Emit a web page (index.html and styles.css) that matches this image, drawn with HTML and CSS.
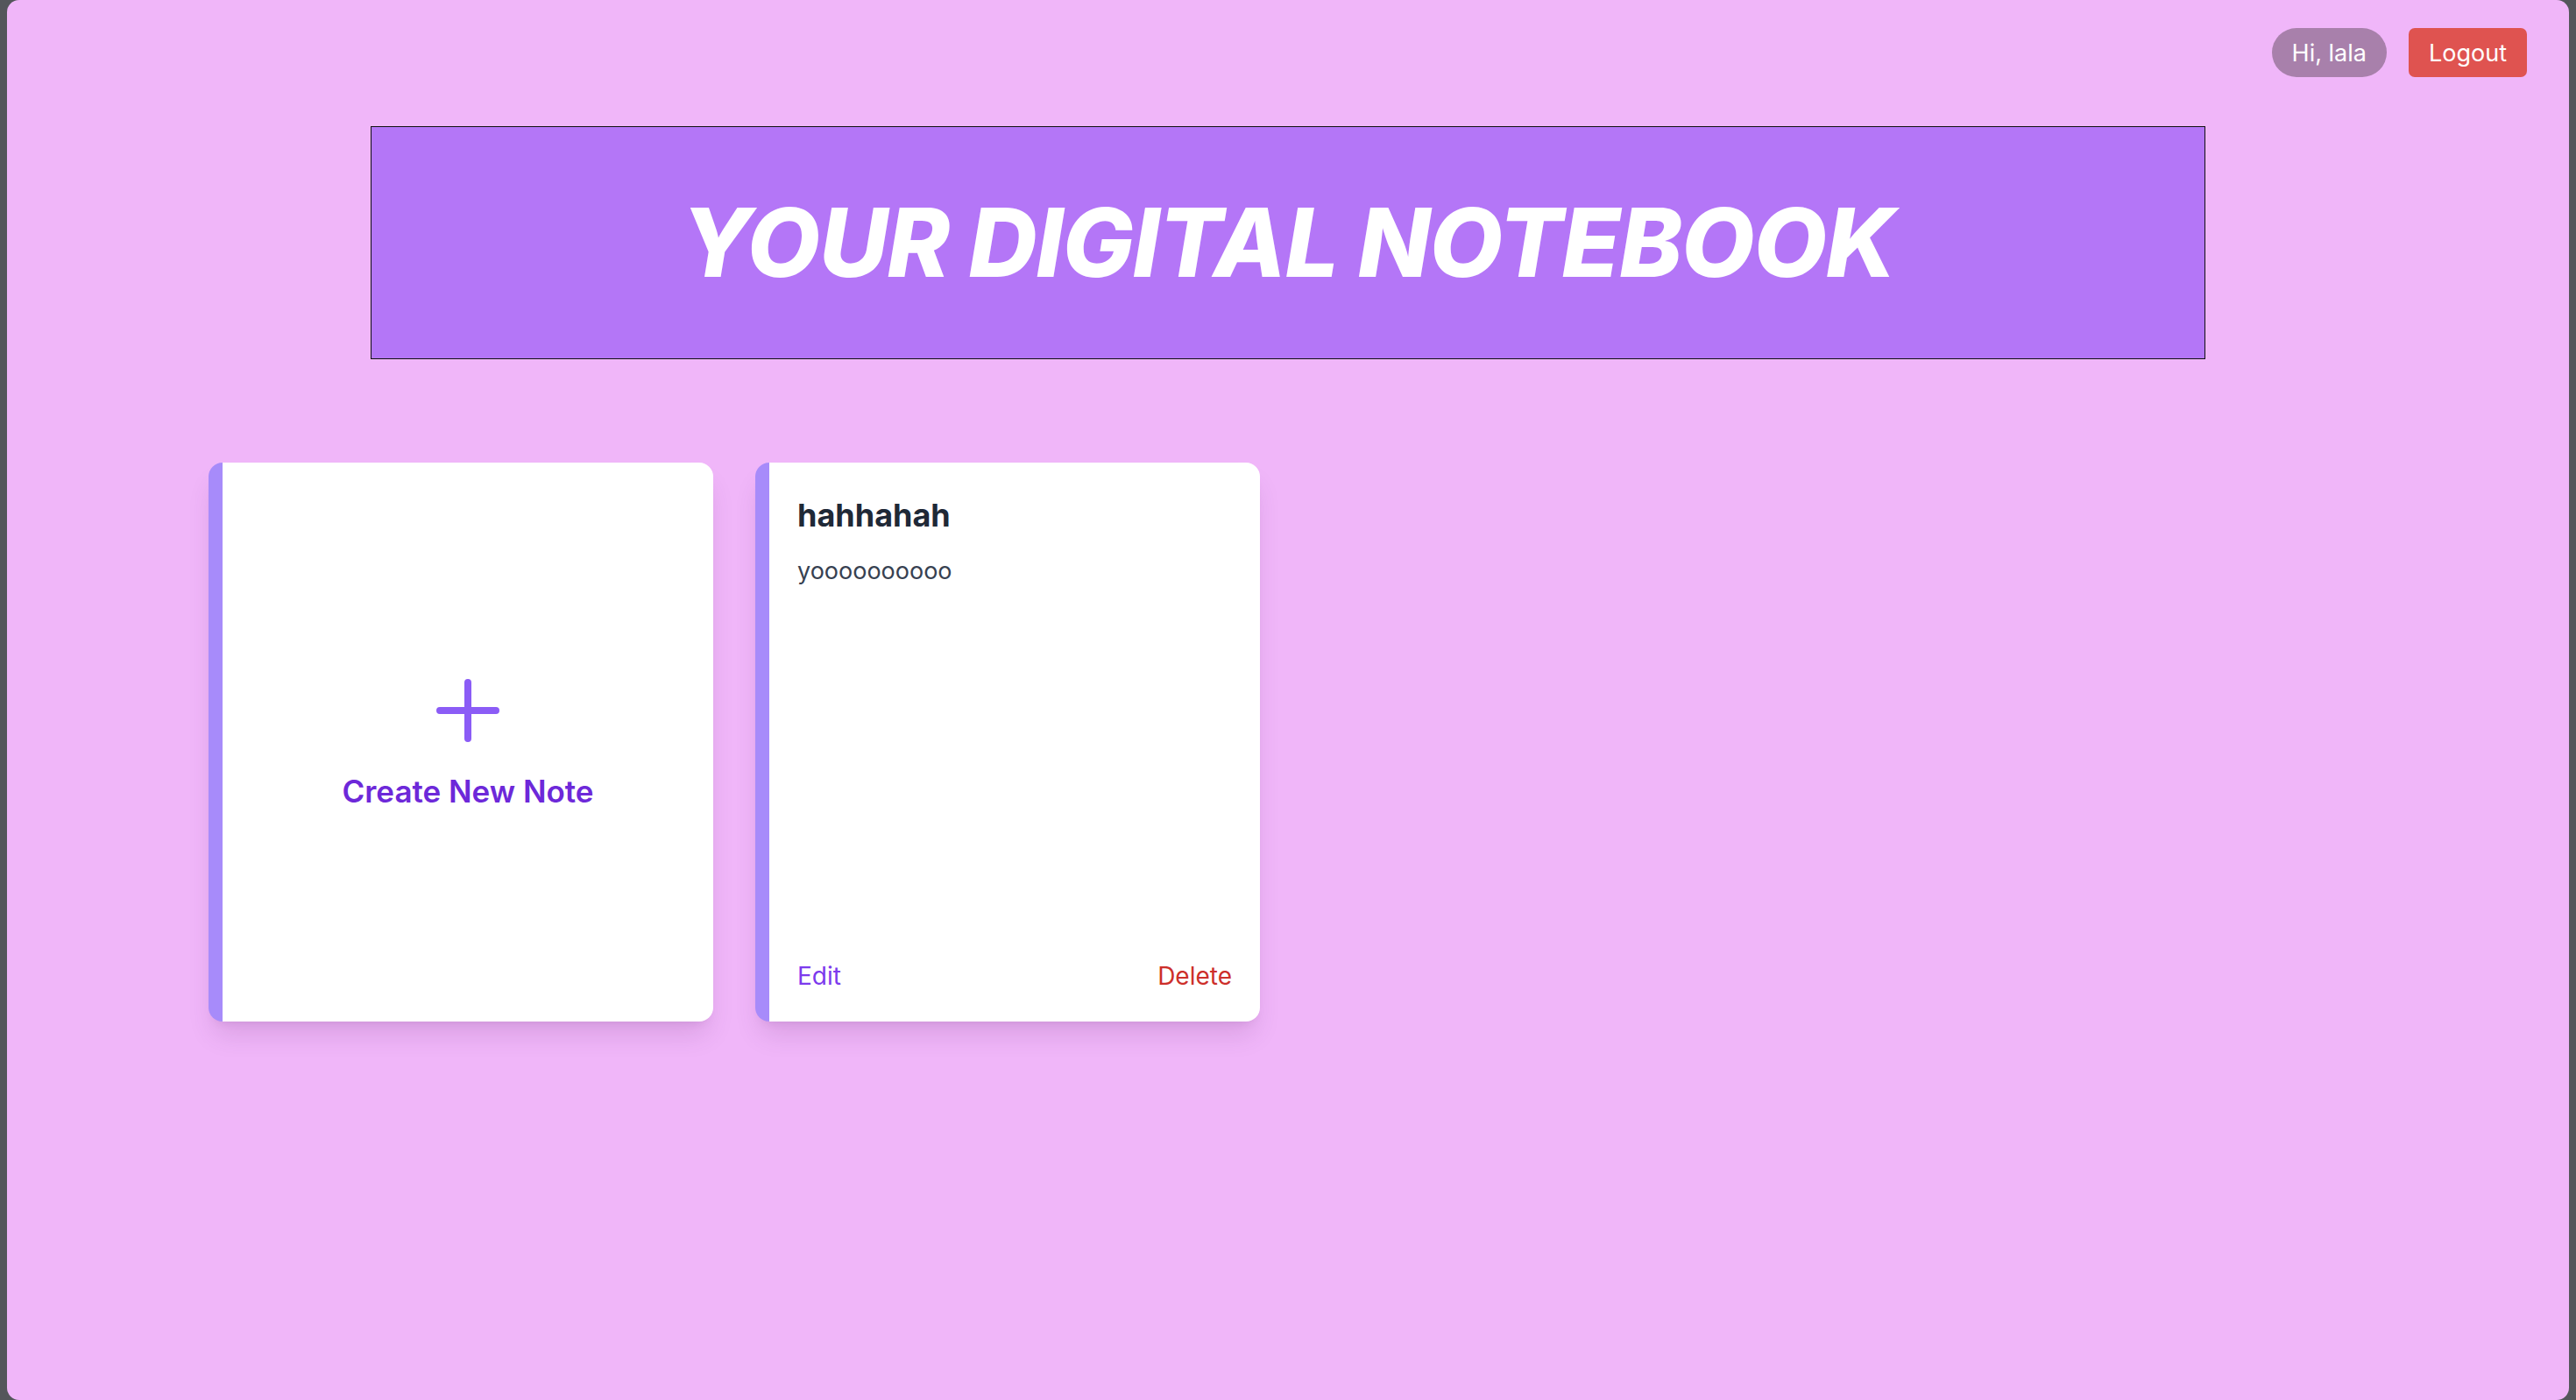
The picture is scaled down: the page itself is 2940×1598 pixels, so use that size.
FILE: index.html
```html
<!DOCTYPE html>
<html lang="en">
<head>
<meta charset="utf-8">
<title>Your Digital Notebook</title>
<link rel="stylesheet" href="styles.css">
</head>
<body>
<div class="window">
  <div class="topbar">
    <span class="greeting">Hi, lala</span>
    <button class="logout">Logout</button>
  </div>
  <header class="hero">
    <h1 class="hero-title">YOUR DIGITAL NOTEBOOK</h1>
  </header>
  <main class="notes">
    <div class="card card-create">
      <svg class="plus" viewBox="0 0 24 24" fill="none" stroke="currentColor" stroke-width="2" stroke-linecap="round" stroke-linejoin="round"><path d="M12 4v16m8-8H4"/></svg>
      <span class="create-label">Create New Note</span>
    </div>
    <div class="card card-note">
      <h2 class="note-title">hahhahah</h2>
      <p class="note-body">yoooooooooo</p>
      <div class="note-actions">
        <span class="edit">Edit</span>
        <span class="delete">Delete</span>
      </div>
    </div>
  </main>
</div>
</body>
</html>
```
FILE: styles.css
```css
html, body {
  margin: 0;
  padding: 0;
  background: #54565b;
}
body {
  font-family: Inter, "Noto Sans", "Liberation Sans", sans-serif;
}
.window {
  margin: 0 8px;
  height: 1598px;
  background: #f0b6f9;
  border-radius: 14px;
  overflow: hidden;
  box-sizing: border-box;
}
.topbar {
  display: flex;
  justify-content: flex-end;
  align-items: center;
  gap: 25px;
  padding: 32px 48px 0;
}
.greeting,
.logout {
  display: inline-flex;
  align-items: center;
  height: 56px;
  padding: 0 23px;
  font-size: 27px;
  color: #ffffff;
  font-family: inherit;
  box-sizing: border-box;
}
.greeting {
  background: #a880ab;
  border-radius: 9999px;
}
.logout {
  background: #df5350;
  border: none;
  border-radius: 7px;
}
.hero {
  width: 2094px;
  height: 266px;
  margin: 56px auto 0;
  background: #b476f7;
  border: 1px solid #111;
  box-sizing: border-box;
  display: flex;
  align-items: center;
  justify-content: center;
}
.hero-title {
  margin: 0;
  font-size: 108px;
  font-weight: 800;
  font-style: italic;
  color: #ffffff;
  letter-spacing: -1px;
  line-height: 1;
}
.notes {
  width: 2560px;
  margin: 118px auto 0;
  padding: 0 48px;
  box-sizing: border-box;
  display: grid;
  grid-template-columns: repeat(4, 576px);
  gap: 48px;
}
.card {
  height: 638px;
  background: #ffffff;
  border-left: 16px solid #a78bfa;
  border-radius: 16px;
  box-shadow: 0 20px 30px -6px rgba(80, 20, 90, 0.14), 0 8px 12px -8px rgba(80, 20, 90, 0.12);
  box-sizing: border-box;
}
.card-create {
  display: flex;
  flex-direction: column;
  align-items: center;
  justify-content: center;
  gap: 16px;
}
.plus {
  width: 96px;
  height: 96px;
  color: #8b5cf6;
}
.create-label {
  font-size: 35px;
  line-height: 56px;
  font-weight: 600;
  color: #6d28d9;
}
.card-note {
  display: flex;
  flex-direction: column;
  padding: 32px;
}
.note-title {
  margin: 0;
  font-size: 36px;
  line-height: 56px;
  font-weight: 700;
  color: #1f2937;
}
.note-body {
  margin: 16px 0 0;
  font-size: 27px;
  line-height: 40px;
  color: #374151;
}
.note-actions {
  margin-top: auto;
  display: flex;
  justify-content: space-between;
  font-size: 28px;
  line-height: 40px;
}
.edit {
  color: #7c3aed;
}
.delete {
  color: #cd2f2a;
}
```
